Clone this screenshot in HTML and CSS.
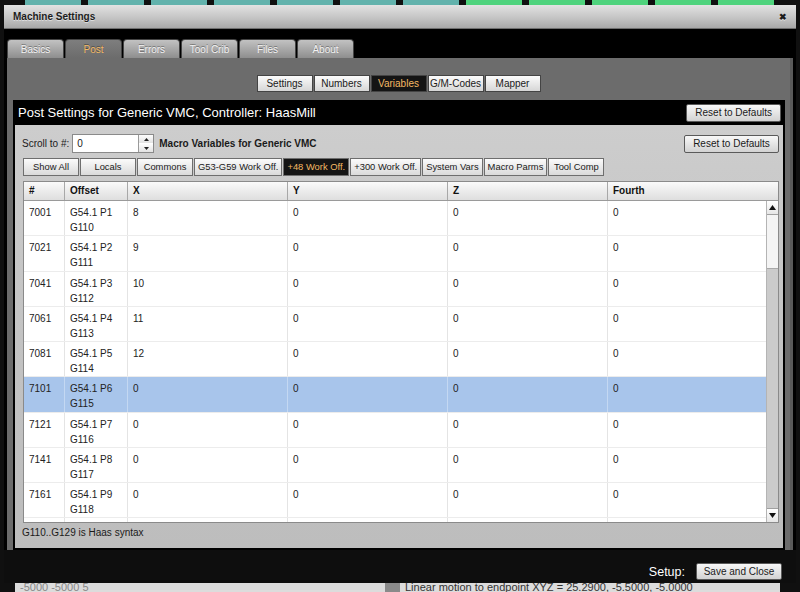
FILE: index.html
```html
<!DOCTYPE html>
<html lang="en">
<head>
    <meta charset="UTF-8">
    <title>Machine Settings</title>
    <link rel="stylesheet" href="styles.css">
</head>
<body>
    <div class="desk-top">
        <span></span><span></span><span></span><span></span><span></span><span></span><span></span>
        <span class="green"></span><span class="green"></span><span class="green"></span><span class="green"></span><span class="green"></span>
    </div>

    <div class="window">
        <div class="titlebar">
            <span>Machine Settings</span>
            <span class="close">&#x2716;</span>
        </div>

        <div class="tabbar">
            <div class="tab">Basics</div>
            <div class="tab active">Post</div>
            <div class="tab">Errors</div>
            <div class="tab">Tool Crib</div>
            <div class="tab">Files</div>
            <div class="tab">About</div>
        </div>

        <div class="content">
            <div class="subtabs">
                <div class="subtab">Settings</div>
                <div class="subtab">Numbers</div>
                <div class="subtab active">Variables</div>
                <div class="subtab">G/M-Codes</div>
                <div class="subtab">Mapper</div>
            </div>

            <div class="postbox">
                <div class="posthead">
                    <h1>Post Settings for Generic VMC, Controller: HaasMill</h1>
                    <button class="btn">Reset to Defaults</button>
                </div>

                <div class="panel">
                    <div class="scrollrow">
                        <label>Scroll to #:</label>
                        <div class="spinner">
                            <span class="spin-value">0</span>
                            <div class="spin-btns">
                                <span class="spin-btn"><svg width="5" height="3" viewBox="0 0 5 3"><polygon points="0,3 2.5,0 5,3" fill="#222"/></svg></span>
                                <span class="spin-btn"><svg width="5" height="3" viewBox="0 0 5 3"><polygon points="0,0 2.5,3 5,0" fill="#222"/></svg></span>
                            </div>
                        </div>
                        <span class="macro-title">Macro Variables for Generic VMC</span>
                        <button class="btn reset-right">Reset to Defaults</button>
                    </div>

                    <div class="filters">
                        <div class="filter">Show All</div>
                        <div class="filter">Locals</div>
                        <div class="filter">Commons</div>
                        <div class="filter">G53-G59 Work Off.</div>
                        <div class="filter active">+48 Work Off.</div>
                        <div class="filter">+300 Work Off.</div>
                        <div class="filter">System Vars</div>
                        <div class="filter">Macro Parms</div>
                        <div class="filter">Tool Comp</div>
                    </div>

                    <div class="grid">
                        <div class="grid-head">
                            <div>#</div><div>Offset</div><div>X</div><div>Y</div><div>Z</div><div>Fourth</div>
                        </div>
                        <div class="grid-body">
                            <div class="rows">
                                <div class="row"><div>7001</div><div>G54.1 P1<br>G110</div><div>8</div><div>0</div><div>0</div><div>0</div></div>
                                <div class="row"><div>7021</div><div>G54.1 P2<br>G111</div><div>9</div><div>0</div><div>0</div><div>0</div></div>
                                <div class="row"><div>7041</div><div>G54.1 P3<br>G112</div><div>10</div><div>0</div><div>0</div><div>0</div></div>
                                <div class="row"><div>7061</div><div>G54.1 P4<br>G113</div><div>11</div><div>0</div><div>0</div><div>0</div></div>
                                <div class="row"><div>7081</div><div>G54.1 P5<br>G114</div><div>12</div><div>0</div><div>0</div><div>0</div></div>
                                <div class="row selected"><div>7101</div><div>G54.1 P6<br>G115</div><div>0</div><div>0</div><div>0</div><div>0</div></div>
                                <div class="row"><div>7121</div><div>G54.1 P7<br>G116</div><div>0</div><div>0</div><div>0</div><div>0</div></div>
                                <div class="row"><div>7141</div><div>G54.1 P8<br>G117</div><div>0</div><div>0</div><div>0</div><div>0</div></div>
                                <div class="row"><div>7161</div><div>G54.1 P9<br>G118</div><div>0</div><div>0</div><div>0</div><div>0</div></div>
                                <div class="row"><div></div><div></div><div></div><div></div><div></div><div></div></div>
                            </div>
                            <div class="scrollbar">
                                <span class="sb-btn"><svg width="7" height="5" viewBox="0 0 7 5"><polygon points="0,5 3.5,0 7,5" fill="#111"/></svg></span>
                                <span class="sb-thumb"></span>
                                <span class="sb-track"></span>
                                <span class="sb-btn"><svg width="7" height="5" viewBox="0 0 7 5"><polygon points="0,0 3.5,5 7,0" fill="#111"/></svg></span>
                            </div>
                        </div>
                    </div>

                    <div class="note">G110..G129 is Haas syntax</div>
                </div>
            </div>
        </div>

        <div class="footer">
            <span class="setup">Setup:</span>
            <button class="btn">Save and Close</button>
        </div>
    </div>

    <div class="behind">
        <div class="behind-dark"></div>
        <div class="behind-pane left"><span>-5000 -5000 5</span></div>
        <div class="behind-gap"></div>
        <div class="behind-pane right"><span>Linear motion to endpoint XYZ = 25.2900, -5.5000, -5.0000</span></div>
    </div>
</body>
</html>
```

FILE: styles.css
```css
* {
    box-sizing: border-box;
}
body {
    margin: 0;
    width: 800px;
    height: 592px;
    overflow: hidden;
    background-color: #101010;
    font-family: "Liberation Sans", Arial, sans-serif;
    font-size: 10px;
    color: #1a1a1a;
}
.desk-top {
    height: 5px;
    display: flex;
    gap: 7px;
    padding-left: 25px;
}
.desk-top span {
    width: 56px;
    height: 5px;
    background-color: #62b2ac;
}
.desk-top span.green {
    background-color: #4fd37d;
}
.window {
    width: 792px;
    height: 578px;
    margin-left: 4px;
    display: flex;
    flex-direction: column;
    background-color: #000;
}
.titlebar {
    height: 24px;
    flex: none;
    display: flex;
    align-items: center;
    justify-content: space-between;
    padding: 0 9px 0 9px;
    background: linear-gradient(#e2e2e2, #c2c2c2 60%, #a8a8a8);
    border-bottom: 1px solid #6e6e6e;
    font-weight: bold;
    color: #1c1c1c;
    text-shadow: 0 1px 0 rgba(255, 255, 255, 0.5);
}
.close {
    font-size: 9px;
}
.tabbar {
    height: 29px;
    flex: none;
    padding: 10px 0 0 3px;
    display: flex;
    gap: 1px;
}
.tab {
    width: 57px;
    height: 19px;
    border: 1px solid #444;
    border-bottom: none;
    border-radius: 4px 4px 0 0;
    background: linear-gradient(#c2c2c2, #8e8e8e);
    color: #f2f2f2;
    text-align: center;
    line-height: 19px;
    text-shadow: 0 -1px 0 rgba(0, 0, 0, 0.35);
}
.tab.active {
    background: linear-gradient(#7e7e7e, #6c6c6c);
    color: #f3b964;
}
.content {
    flex: 1;
    margin: 0 3px;
    background-color: #6c6c6c;
    border-right: 3px solid #5a5a5a;
    display: flex;
    flex-direction: column;
}
.subtabs {
    display: flex;
    justify-content: center;
    gap: 1px;
    padding-top: 17px;
}
.subtab {
    width: 56px;
    height: 17px;
    line-height: 15px;
    text-align: center;
    border: 1px solid #444;
    background: linear-gradient(#fbfbfb, #d6d6d6);
    color: #1a1a1a;
}
.subtab.active {
    background: #141414;
    color: #f3b964;
}
.postbox {
    flex: 1;
    margin: 8px 5px 0 6px;
    background-color: #000;
    display: flex;
    flex-direction: column;
}
.posthead {
    height: 25px;
    flex: none;
    display: flex;
    align-items: center;
    justify-content: space-between;
    padding: 0 4px 0 5px;
}
h1 {
    margin: 0;
    font-size: 13px;
    font-weight: normal;
    color: #fff;
}
.btn {
    height: 18px;
    padding: 0 8px;
    border: 1px solid #5a5a5a;
    border-radius: 2px;
    background: linear-gradient(#f8f8f8, #d2d2d2);
    font-family: "Liberation Sans", Arial, sans-serif;
    font-size: 10px;
    color: #1a1a1a;
}
.panel {
    flex: 1;
    margin: 0 2px 2px;
    padding: 9px 4px 0 7px;
    background: linear-gradient(#cdcdcd, #c3c3c3 50%, #bdbdbd);
    display: flex;
    flex-direction: column;
}
.scrollrow {
    height: 19px;
    display: flex;
    align-items: center;
}
.spinner {
    width: 82px;
    height: 19px;
    margin-left: 3px;
    border: 1px solid #8a8a8a;
    background-color: #fff;
    display: flex;
    align-items: center;
}
.spin-value {
    flex: 1;
    padding-left: 4px;
}
.spin-btns {
    width: 15px;
    height: 17px;
    display: flex;
    flex-direction: column;
    gap: 1px;
    border-left: 1px solid #9a9a9a;
}
.spin-btn {
    flex: 1;
    display: flex;
    align-items: center;
    justify-content: center;
    background: linear-gradient(#fdfdfd, #e2e2e2);
}
.macro-title {
    margin-left: 5px;
    font-weight: bold;
}
.reset-right {
    margin-left: auto;
    width: 95px;
}
.filters {
    display: flex;
    gap: 1px;
    margin: 5px 0 0 1px;
}
.filter {
    min-width: 56px;
    height: 18px;
    padding: 0 3px;
    line-height: 16px;
    font-size: 9.4px;
    text-align: center;
    white-space: nowrap;
    border: 1px solid #6e6e6e;
    background: linear-gradient(#fbfbfb, #dadada);
}
.filter.active {
    background: #141414;
    color: #f3b964;
}
.grid {
    height: 342px;
    margin: 5px 0 0 1px;
    border: 1px solid #8a8a8a;
    background-color: #fff;
    display: flex;
    flex-direction: column;
}
.grid-head {
    height: 19px;
    flex: none;
    display: grid;
    grid-template-columns: 41px 63px 160px 160px 160px 1fr;
    background: linear-gradient(#fafafa, #dedede);
    border-bottom: 1px solid #9a9a9a;
    font-weight: bold;
    color: #111;
}
.grid-head div {
    padding: 3px 0 0 5px;
    border-right: 1px solid #a8a8a8;
}
.grid-head div:last-child {
    border-right: none;
}
.grid-body {
    flex: 1;
    display: flex;
    overflow: hidden;
}
.rows {
    flex: 1;
    overflow: hidden;
}
.row {
    height: 35.25px;
    display: grid;
    grid-template-columns: 41px 63px 160px 160px 160px 1fr;
    border-bottom: 1px solid #ececec;
    color: #222;
}
.row div {
    padding: 4px 0 0 5px;
    line-height: 15px;
    border-right: 1px solid #e4e4e4;
}
.row div:last-child {
    border-right: none;
}
.row.selected {
    background-color: #a8c5eb;
}
.row.selected div {
    border-right-color: #c4d8f2;
}
.scrollbar {
    width: 12px;
    flex: none;
    display: flex;
    flex-direction: column;
    border-left: 1px solid #b4b4b4;
    background-color: #cbcbcb;
}
.sb-btn {
    height: 14px;
    display: flex;
    align-items: center;
    justify-content: center;
    background: linear-gradient(#ffffff, #e6e6e6);
    border-bottom: 1px solid #a0a0a0;
}
.sb-btn:last-child {
    border-bottom: none;
    border-top: 1px solid #a0a0a0;
}
.sb-thumb {
    height: 54px;
    background-color: #f4f4f4;
    border-bottom: 1px solid #a8a8a8;
}
.sb-track {
    flex: 1;
}
.note {
    padding: 4px 0 0 0;
    line-height: 12px;
    color: #1a1a1a;
}
.footer {
    height: 33px;
    flex: none;
    display: flex;
    align-items: center;
    justify-content: flex-end;
    gap: 11px;
    padding: 10px 14px 0 0;
    background-color: #0e0e0e;
}
.setup {
    font-size: 12.5px;
    color: #fff;
}
.footer .btn {
    height: 17px;
    width: 86px;
    padding: 0;
}
.behind {
    height: 9px;
    display: flex;
    overflow: hidden;
    font-size: 11px;
    line-height: 9px;
}
.behind-dark {
    width: 15px;
    background-color: #101010;
}
.behind-pane {
    background-color: #dcdcdc;
    color: #333;
    padding-left: 5px;
    overflow: hidden;
    white-space: nowrap;
}
.behind-pane.left {
    width: 370px;
    color: #888;
}
.behind-pane.right {
    width: 380px;
}
.behind-gap {
    width: 15px;
    background-color: #8a8a8a;
}
```
